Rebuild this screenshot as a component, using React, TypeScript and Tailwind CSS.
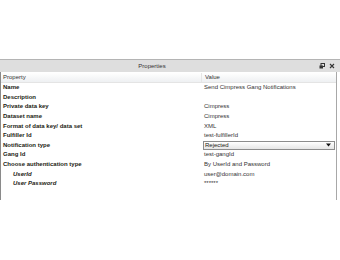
import React from 'react';

type Row = { name: string; value?: string; indent?: boolean; dropdown?: boolean };

const rows: Row[] = [
  { name: 'Name', value: 'Send Cimpress Gang Notifications' },
  { name: 'Description', value: '' },
  { name: 'Private data key', value: 'Cimpress' },
  { name: 'Dataset name', value: 'Cimpress' },
  { name: 'Format of data key/ data set', value: 'XML' },
  { name: 'Fulfiller Id', value: 'test-fulfillerId' },
  { name: 'Notification type', value: 'Rejected', dropdown: true },
  { name: 'Gang Id', value: 'test-gangId' },
  { name: 'Choose authentication type', value: 'By UserId and Password' },
  { name: 'UserId', value: 'user@domain.com', indent: true },
  { name: 'User Password', value: '******', indent: true },
];

const App = () => {
  return (
    <div
      className="w-[340px] h-[260px] bg-white overflow-hidden text-[6px] text-[#1c1c14]"
      style={{ fontFamily: '"Liberation Sans", Arial, sans-serif' }}
    >
      <div className="h-[59px]" />
      <div className="flex flex-col">
        {/* title bar */}
        <div className="h-[13px] border-t border-[#b4b4b4] bg-[#dedede] flex items-center relative">
          <div className="flex-1 text-center text-[#333]">
            <span className="mr-[36px]">Properties</span>
          </div>
          <div className="absolute right-[5px] top-[3px] flex items-center gap-[4px]">
            <svg width="6" height="6" viewBox="0 0 6 6">
              <rect x="2" y="0.5" width="3.5" height="3" fill="none" stroke="#333" strokeWidth="1" />
              <rect x="0.5" y="2.5" width="3.5" height="3" fill="#333" />
            </svg>
            <svg width="6" height="6" viewBox="0 0 6 6">
              <path d="M1 1 L5 5 M5 1 L1 5" stroke="#333" strokeWidth="1.1" />
            </svg>
          </div>
        </div>
        <div className="flex flex-col border-l border-l-[#8a8a8a] h-[128px] mr-[3px] border-r border-r-[#a8a8a8]">
          {/* header */}
          <div className="h-[10px] mt-[1px] flex items-center bg-gradient-to-b from-white to-[#eef0f2] border-b border-[#e4e4e4] text-[#333]">
            <div className="w-[200px] pl-[2px]">Property</div>
            <div className="flex-1 pl-[3px] border-l border-[#e6e6e6]">Value</div>
          </div>
          {rows.map((r) => (
            <div key={r.name} className="h-[9.6px] flex items-center">
              <div
                className={`w-[200px] font-bold ${r.indent ? 'pl-[12px] italic' : 'pl-[2px]'}`}
              >
                {r.name}
              </div>
              {r.dropdown ? (
                <div className="flex-1 h-[9px] ml-[2px] mr-[1px] border border-[#8c8c8c] bg-gradient-to-b from-white to-[#e6e6e6] flex items-center justify-between pl-[1px] pr-[3px]">
                  <span>{r.value}</span>
                  <svg width="5" height="4" viewBox="0 0 5 4">
                    <path d="M0 0.5 H5 L2.5 3.5 Z" fill="#111" />
                  </svg>
                </div>
              ) : (
                <div className="flex-1 pl-[3px] text-[#333]">{r.value}</div>
              )}
            </div>
          ))}
        </div>
      </div>
    </div>
  );
};

export default App;
